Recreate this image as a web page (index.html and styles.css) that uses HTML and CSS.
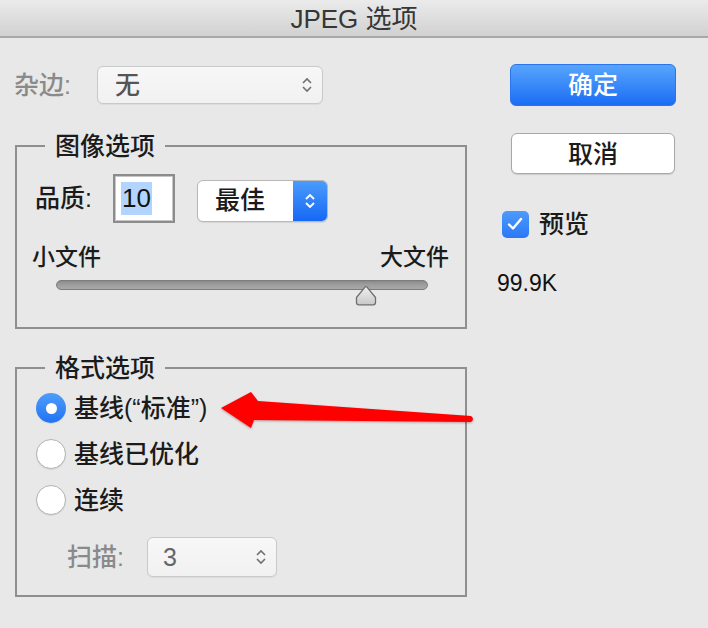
FILE: index.html
```html
<!DOCTYPE html>
<html lang="zh-CN">
<head>
<meta charset="utf-8">
<title>JPEG 选项</title>
<link rel="stylesheet" href="styles.css">
</head>
<body>
<div class="dialog">
  <header class="titlebar">JPEG 选项</header>
  <div class="content">
    <div class="left">
      <div class="matte-row">
        <span class="field-label dim">杂边:</span>
        <div class="select matte">
          <span class="select-value">无</span>
          <svg class="updown" width="14" height="20" viewBox="0 0 14 20"><path d="M3 8 L7 4 L11 8 M3 12 L7 16 L11 12" fill="none" stroke="#707070" stroke-width="1.6"/></svg>
        </div>
      </div>

      <fieldset class="group image-opts">
        <legend>图像选项</legend>
        <div class="quality-row">
          <span class="field-label quality-label">品质:</span>
          <div class="num-input"><span class="num-sel">10</span></div>
          <div class="popup">
            <span class="popup-value">最佳</span>
            <span class="popup-arrow">
              <svg width="14" height="20" viewBox="0 0 14 20"><path d="M3 8 L7 4 L11 8 M3 12 L7 16 L11 12" fill="none" stroke="#ffffff" stroke-width="1.8"/></svg>
            </span>
          </div>
        </div>
        <div class="size-labels"><span>小文件</span><span>大文件</span></div>
        <div class="slider">
          <div class="track"></div>
          <div class="thumb" style="left: calc(83.4% - 11px)">
            <svg width="22" height="21" viewBox="0 0 22 21">
              <defs>
                <linearGradient id="thumbFill" x1="0" y1="0" x2="0" y2="1">
                  <stop offset="0" stop-color="#f0f0f0"/>
                  <stop offset="1" stop-color="#c9c9c9"/>
                </linearGradient>
              </defs>
              <path d="M1.5 12.5 L10 2.2 Q11 1 12 2.2 L20.5 12.5 L20.5 17.5 Q20.5 19.8 18.2 19.8 L3.8 19.8 Q1.5 19.8 1.5 17.5 Z" fill="url(#thumbFill)" stroke="#6f6f6f" stroke-width="1.3" stroke-linejoin="round"/>
            </svg>
          </div>
        </div>
      </fieldset>

      <fieldset class="group format-opts">
        <legend>格式选项</legend>
        <div class="radio-row"><span class="radio checked"></span><span class="radio-label">基线(“标准”)</span></div>
        <div class="radio-row"><span class="radio"></span><span class="radio-label">基线已优化</span></div>
        <div class="radio-row"><span class="radio"></span><span class="radio-label">连续</span></div>
        <div class="scan-row">
          <span class="field-label dim scan-label">扫描:</span>
          <div class="select scan">
            <span class="select-value num">3</span>
            <svg class="updown" width="14" height="20" viewBox="0 0 14 20"><path d="M3 8 L7 4 L11 8 M3 12 L7 16 L11 12" fill="none" stroke="#707070" stroke-width="1.6"/></svg>
          </div>
        </div>
      </fieldset>
    </div>

    <div class="right">
      <button class="btn primary">确定</button>
      <button class="btn secondary">取消</button>
      <div class="check-row">
        <span class="checkbox"><svg width="26" height="26" viewBox="0 0 26 26"><path d="M7 13.5 L11 17.5 L19 8" fill="none" stroke="#ffffff" stroke-width="2.4" stroke-linecap="round" stroke-linejoin="round"/></svg></span>
        <span class="check-label">预览</span>
      </div>
      <div class="file-size">99.9K</div>
    </div>
  </div>

  <svg class="annotation" width="708" height="628" viewBox="0 0 708 628">
    <path d="M221 408 L251 392 L258 401 L471 416 Q475 419 471 422 L254 420 L251 428 Z" fill="#ff0000"/>
  </svg>
</div>
</body>
</html>
```

FILE: styles.css
```css
* { box-sizing: border-box; }

html, body {
  margin: 0;
  padding: 0;
}

body {
  width: 708px;
  height: 628px;
  overflow: hidden;
  background: #e8e8e8;
  font-family: "Liberation Sans", "Noto Sans CJK SC", sans-serif;
  font-weight: 500;
  color: #1b1b1b;
}

.dialog {
  position: relative;
  width: 708px;
  height: 628px;
  background: #e8e8e8;
}

.titlebar {
  height: 38px;
  display: flex;
  align-items: center;
  justify-content: center;
  padding-bottom: 3px;
  font-size: 26px;
  font-weight: 400;
  color: #363636;
  background: linear-gradient(#ebebeb, #d1d1d1);
  border-bottom: 2px solid #a8a8a8;
}

.content {
  display: flex;
}

.left {
  width: 480px;
  padding: 28px 0 0 14px;
  display: flex;
  flex-direction: column;
}

.field-label {
  font-size: 25px;
  line-height: 30px;
}

.dim { color: #8a8a8a; }

.matte-row {
  display: flex;
  align-items: center;
  height: 38px;
}

.matte-row .field-label { width: 83px; }

.select {
  display: flex;
  align-items: center;
  justify-content: space-between;
  border: 1px solid #c9c9c9;
  border-radius: 6px;
  background: linear-gradient(#f7f7f7, #f1f1f1);
  box-shadow: 0 1px 1px rgba(0,0,0,0.06);
}

.select-value {
  font-size: 25px;
  line-height: 30px;
  color: #555555;
}

.select-value.num { color: #666666; }

.matte {
  width: 226px;
  height: 38px;
  padding: 0 8px 0 17px;
}

.group {
  margin: 0 0 0 1px;
  width: 452px;
  border: 2px solid #8f8f8f;
  padding: 0;
  min-width: 0;
}

.group legend {
  padding: 0 10px;
  font-size: 25px;
  line-height: 30px;
  color: #1b1b1b;
}

.image-opts {
  margin-top: 27px;
  padding: 0 16px 37px 18px;
}

.image-opts legend { margin-left: 10px; }

.quality-row {
  margin-top: 13px;
  display: flex;
  align-items: flex-start;
  height: 49px;
}

.quality-label {
  width: 78px;
  margin-top: 9px;
}

.num-input {
  width: 62px;
  height: 49px;
  background: #ffffff;
  border: 2px solid #8c8c8c;
  box-shadow: inset 0 0 0 1px #c6c6c6;
  padding: 6px 0 0 6px;
}

.num-sel {
  display: inline-block;
  background: #b3d5fd;
  font-size: 26px;
  font-weight: 400;
  line-height: 33px;
  padding: 0 1px;
  color: #111111;
}

.popup {
  margin: 6px 0 0 22px;
  width: 131px;
  height: 42px;
  display: flex;
  border: 1px solid #b8b8b8;
  border-radius: 6px;
  background: #ffffff;
  overflow: hidden;
  box-shadow: 0 1px 1px rgba(0,0,0,0.08);
}

.popup-value {
  flex: 1;
  padding-left: 17px;
  font-size: 25px;
  line-height: 38px;
}

.popup-arrow {
  width: 34px;
  display: flex;
  align-items: center;
  justify-content: center;
  background: linear-gradient(#4b9cfc, #1668f5);
}

.size-labels {
  margin: 21px 0 0 -3px;
  display: flex;
  justify-content: space-between;
  font-size: 23px;
  line-height: 26px;
}

.slider {
  position: relative;
  margin: 10px 21px 0 21px;
  height: 10px;
}

.track {
  height: 10px;
  border-radius: 5px;
  background: linear-gradient(#8a8a8a, #9c9c9c 40%, #a9a9a9);
  border: 1px solid #7c7c7c;
}

.thumb {
  position: absolute;
  top: 5px;
  width: 22px;
  height: 21px;
}

.thumb svg { display: block; }

.format-opts {
  margin-top: 24px;
  padding: 2px 0 18px 19px;
}

.format-opts legend { margin-left: 9px; }

.radio-row {
  display: flex;
  align-items: center;
  height: 46px;
}

.radio {
  width: 30px;
  height: 30px;
  border-radius: 50%;
  background: #ffffff;
  border: 1px solid #b2b2b2;
  box-shadow: 0 1px 1px rgba(0,0,0,0.08);
  display: flex;
  align-items: center;
  justify-content: center;
}

.radio.checked {
  border: none;
  background: linear-gradient(#4f9dfb, #2272f5);
}

.radio.checked::after {
  content: "";
  width: 11px;
  height: 11px;
  border-radius: 50%;
  background: #ffffff;
}

.radio-label {
  margin-left: 8px;
  font-size: 25px;
  line-height: 30px;
}

.scan-row {
  margin-top: 14px;
  padding-left: 31px;
  display: flex;
  align-items: center;
  height: 40px;
}

.scan-label { width: 80px; }

.scan {
  width: 130px;
  height: 40px;
  padding: 0 8px 0 15px;
}

.right {
  flex: 1;
  padding: 26px 0 0 30px;
  display: flex;
  flex-direction: column;
  align-items: flex-start;
}

.btn {
  font-family: "Liberation Sans", "Noto Sans CJK SC", sans-serif;
  font-size: 25px;
  font-weight: 500;
  line-height: 30px;
  border-radius: 6px;
  padding: 0;
  cursor: default;
}

.primary {
  width: 166px;
  height: 42px;
  color: #ffffff;
  border: 1px solid #2a74ef;
  background: linear-gradient(#58a5fd, #1b6df5);
}

.secondary {
  margin: 27px 0 0 1px;
  width: 164px;
  height: 41px;
  color: #1b1b1b;
  border: 1px solid #a9a9a9;
  background: #ffffff;
  box-shadow: 0 1px 1px rgba(0,0,0,0.12);
}

.check-row {
  margin: 35px 0 0 -8px;
  display: flex;
  align-items: center;
}

.checkbox {
  width: 27px;
  height: 27px;
  border-radius: 5px;
  background: linear-gradient(#4d9bfb, #2b78f6);
  display: flex;
}

.check-label {
  margin-left: 10px;
  font-size: 25px;
  line-height: 30px;
}

.file-size {
  margin: 30px 0 0 -13px;
  font-size: 23px;
  font-weight: 400;
  line-height: 28px;
  color: #111111;
}

.annotation {
  position: absolute;
  left: 0;
  top: 0;
  pointer-events: none;
  filter: drop-shadow(0 1px 1px rgba(90, 0, 0, 0.35));
}
```
